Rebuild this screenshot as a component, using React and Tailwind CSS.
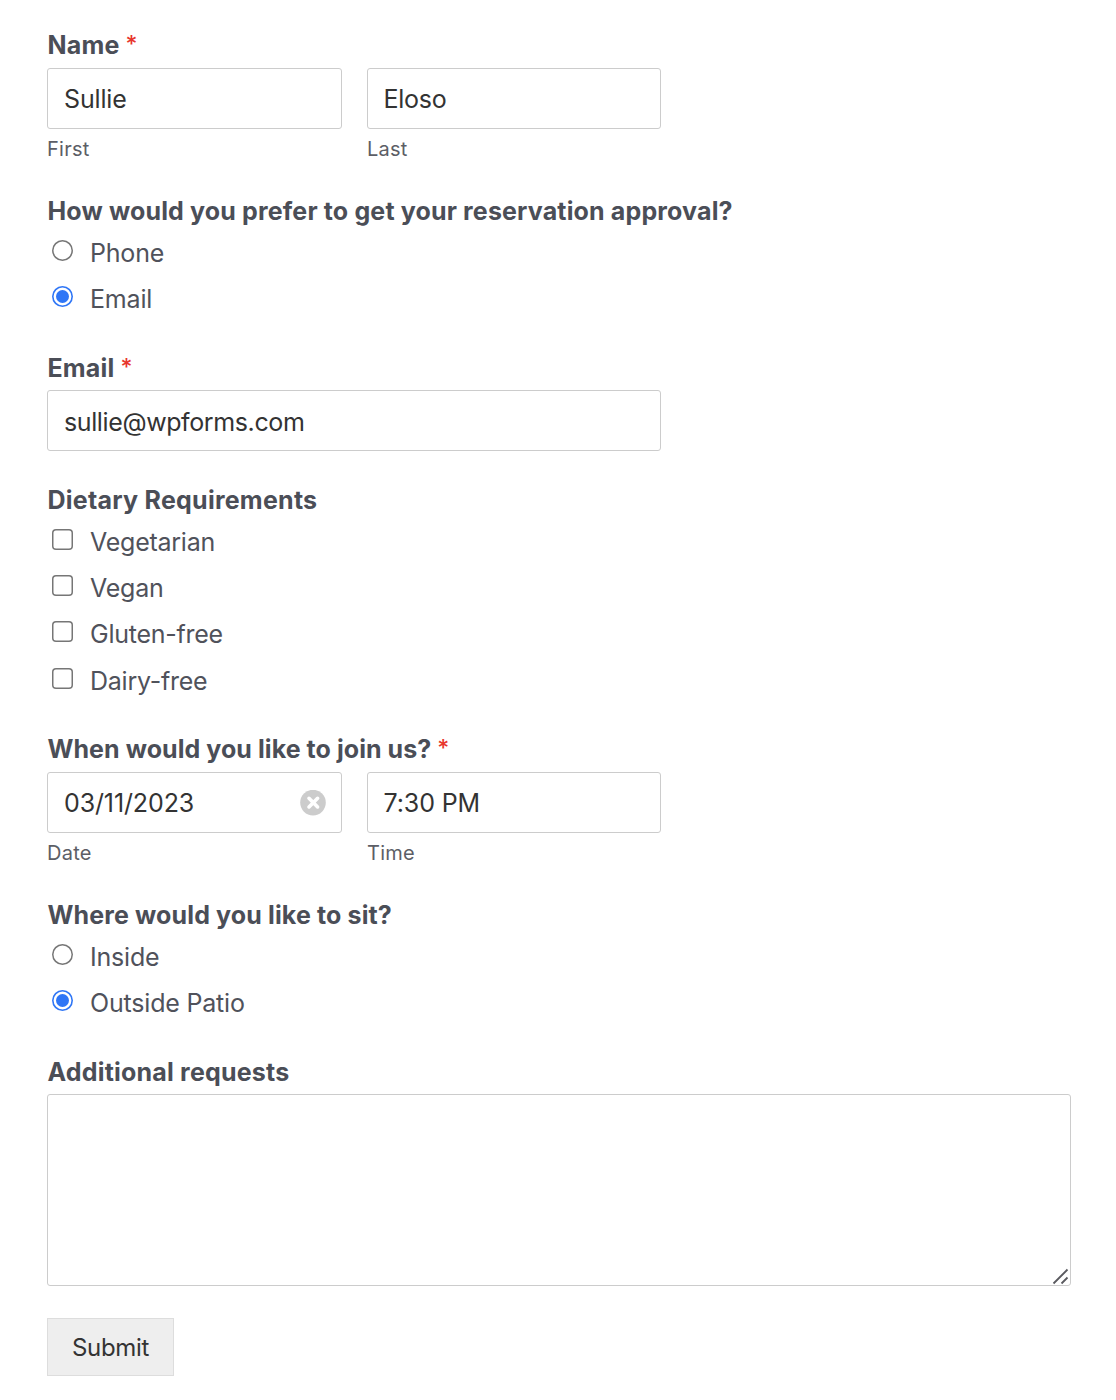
import { useState } from "react";

const inputClass =
  "block h-[61px] w-full rounded-[3px] border border-[#cccccc] bg-white pr-4 text-[25px] text-[#333333] outline-none";

function Label({ children, required, spacing = "tracking-[0.165px]" }) {
  return (
    <p className={`h-[30px] pl-[0.5px] text-[25px] leading-[30px] font-bold whitespace-nowrap text-[#4b4e57] ${spacing}`}>
      {children}
      {required && (
        <span className="ml-1.5 inline-block h-[30px] -translate-y-px align-top text-[23px] font-medium text-[#e8352c]">*</span>
      )}
    </p>
  );
}

function SubLabel({ children }) {
  return <p className="mt-2 h-6 text-[20px] leading-6 tracking-[0.25px] text-[#5c5e66]">{children}</p>;
}

function Radio({ name, label, checked, onChange }) {
  return (
    <label className="flex h-[46px] items-center">
      <span className="mb-[5px] ml-[5px] grid size-[21px] place-items-center">
        <input
          type="radio"
          name={name}
          checked={checked}
          onChange={onChange}
          className="col-start-1 row-start-1 size-[21px] appearance-none rounded-full shadow-[inset_0_0_0_1.5px_#767676] checked:shadow-[inset_0_0_0_1.6px_#2f76f6]"
        />
        {checked && <span className="col-start-1 row-start-1 size-[13px] rounded-full bg-[#2f76f6]" />}
      </span>
      <span className="ml-[17px] text-[25px] leading-[30px] tracking-[-0.19px] text-[#50525b]">{label}</span>
    </label>
  );
}

function Checkbox({ label }) {
  return (
    <label className="flex h-[46px] items-center last:mt-px">
      <input
        type="checkbox"
        className="mb-[5px] ml-[5px] size-[21px] appearance-none rounded-[4px] shadow-[inset_0_0_0_1.5px_#767676] checked:bg-[#2f76f6]"
      />
      <span className="ml-[17px] text-[25px] leading-[30px] tracking-[-0.25px] text-[#50525b]">{label}</span>
    </label>
  );
}

export default function App() {
  const [approval, setApproval] = useState("Email");
  const [seat, setSeat] = useState("Outside Patio");
  const [date, setDate] = useState("03/11/2023");

  return (
    <form
      className="min-h-[1400px] w-[1116px] bg-white pt-[30px] pl-[47px] font-['Inter','Liberation_Sans',sans-serif]"
      onSubmit={(e) => e.preventDefault()}
    >
      {/* Name */}
      <div className="h-[166px]">
        <Label required>Name</Label>
        <div className="mt-2 flex gap-[25px]">
          <div className="w-[295px]">
            <input className={`${inputClass} pl-4 tracking-[-0.15px]`} defaultValue="Sullie" />
            <SubLabel>First</SubLabel>
          </div>
          <div className="w-[294px]">
            <input className={`${inputClass} pl-[15.5px] tracking-[-0.25px]`} defaultValue="Eloso" />
            <SubLabel>Last</SubLabel>
          </div>
        </div>
      </div>

      {/* Approval method */}
      <div className="h-[157px]">
        <Label spacing="tracking-[0.15px]">How would you prefer to get your reservation approval?</Label>
        <div className="mt-1">
          {["Phone", "Email"].map((o) => (
            <Radio key={o} name="approval" label={o} checked={approval === o} onChange={() => setApproval(o)} />
          ))}
        </div>
      </div>

      {/* Email */}
      <div className="h-[132px]">
        <Label required>Email</Label>
        <div className="mt-[7px] w-[614px]">
          <input className={`${inputClass} pt-0.5 pl-4 tracking-[-0.39px]`} defaultValue="sullie@wpforms.com" />
        </div>
      </div>

      {/* Dietary requirements */}
      <div className="h-[249px]">
        <Label spacing="tracking-[0.25px]">Dietary Requirements</Label>
        <div className="mt-1">
          {["Vegetarian", "Vegan", "Gluten-free", "Dairy-free"].map((o) => (
            <Checkbox key={o} label={o} />
          ))}
        </div>
      </div>

      {/* Date and time */}
      <div className="h-[166px]">
        <Label required spacing="tracking-[0.06px]">When would you like to join us?</Label>
        <div className="mt-2 flex gap-[25px]">
          <div className="w-[295px]">
            <div className="flex h-[61px] items-center rounded-[3px] border border-[#cccccc] bg-white pr-[15px] pl-4">
              <input
                className="w-0 grow pt-0.5 text-[25px] tracking-[-0.12px] text-[#333333] outline-none"
                value={date}
                onChange={(e) => setDate(e.target.value)}
              />
              <button type="button" onClick={() => setDate("")}>
                <svg width="26" height="26" viewBox="0 0 26 26">
                  <circle cx="13" cy="12.6" r="12.8" fill="#cccccc" />
                  <path d="M9 8.3l8.6 8.6M17.6 8.3L9 16.9" stroke="#fff" strokeWidth="3.6" strokeLinecap="round" />
                </svg>
              </button>
            </div>
            <SubLabel>Date</SubLabel>
          </div>
          <div className="w-[294px]">
            <input className={`${inputClass} pl-[15.5px] tracking-[-0.1px]`} defaultValue="7:30 PM" />
            <SubLabel>Time</SubLabel>
          </div>
        </div>
      </div>

      {/* Seating */}
      <div className="h-[157px]">
        <Label spacing="tracking-[0.13px]">Where would you like to sit?</Label>
        <div className="mt-1">
          {["Inside", "Outside Patio"].map((o) => (
            <Radio key={o} name="seat" label={o} checked={seat === o} onChange={() => setSeat(o)} />
          ))}
        </div>
      </div>

      {/* Additional requests */}
      <Label spacing="tracking-[0.2px]">Additional requests</Label>
      <div className="relative mt-[7px] h-[192px] w-[1024px]">
        <textarea className="block size-full resize-none rounded-[3px] border border-[#cccccc] bg-white px-4 py-3 text-[25px] text-[#333333] outline-none" />
        <svg className="absolute right-[2px] bottom-[1px]" width="17" height="17" viewBox="0 0 17 17">
          <path d="M1.5 15.5L15.5 1.5M9.5 15.5l6-6" stroke="#5a5a5f" strokeWidth="1.8" />
        </svg>
      </div>

      <button
        type="submit"
        className="mt-8 block h-[58px] w-[127px] border border-[#dddddd] bg-[#eeeeee] pt-0.5 text-[24px] tracking-[-0.3px] text-[#333333]"
      >
        Submit
      </button>
    </form>
  );
}
